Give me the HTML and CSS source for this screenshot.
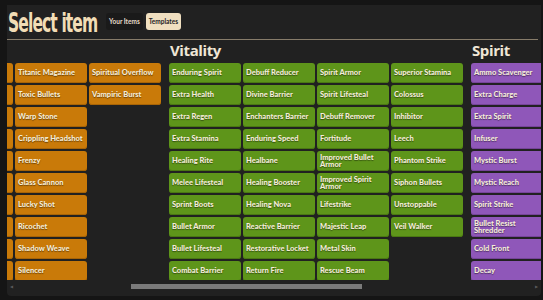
FILE: index.html
```html
<!DOCTYPE html>
<html>
<head>
    <title>Select item</title>
    <link rel="stylesheet" href="styles.css">
</head>
<body>
    <div class="panel">
        <div class="header">
            <h1 class="title">Select item</h1>
            <div class="tabs">
                <button class="tab">Your Items</button>
                <button class="tab active">Templates</button>
            </div>
        </div>

        <div class="shop">
            <div class="groups">
                <!-- weapon group, mostly scrolled off to the left -->
                <div class="group weapon">
                    <h2 class="group-title">&nbsp;</h2>
                    <div class="grid">
                        <div class="item"></div><div class="item"></div><div class="item"></div><div class="item"></div><div class="item"></div>
                        <div class="item"></div><div class="item"></div><div class="item"></div><div class="item"></div><div class="item"></div>
                        <div class="item">Titanic Magazine</div>
                        <div class="item">Toxic Bullets</div>
                        <div class="item">Warp Stone</div>
                        <div class="item">Crippling Headshot</div>
                        <div class="item">Frenzy</div>
                        <div class="item">Glass Cannon</div>
                        <div class="item">Lucky Shot</div>
                        <div class="item">Ricochet</div>
                        <div class="item">Shadow Weave</div>
                        <div class="item">Silencer</div>
                        <div class="item">Spiritual Overflow</div>
                        <div class="item">Vampiric Burst</div>
                    </div>
                </div>

                <div class="group vitality">
                    <h2 class="group-title">Vitality</h2>
                    <div class="grid">
                        <div class="item">Enduring Spirit</div>
                        <div class="item">Extra Health</div>
                        <div class="item">Extra Regen</div>
                        <div class="item">Extra Stamina</div>
                        <div class="item">Healing Rite</div>
                        <div class="item">Melee Lifesteal</div>
                        <div class="item">Sprint Boots</div>
                        <div class="item">Bullet Armor</div>
                        <div class="item">Bullet Lifesteal</div>
                        <div class="item">Combat Barrier</div>
                        <div class="item">Debuff Reducer</div>
                        <div class="item">Divine Barrier</div>
                        <div class="item">Enchanters Barrier</div>
                        <div class="item">Enduring Speed</div>
                        <div class="item">Healbane</div>
                        <div class="item">Healing Booster</div>
                        <div class="item">Healing Nova</div>
                        <div class="item">Reactive Barrier</div>
                        <div class="item">Restorative Locket</div>
                        <div class="item">Return Fire</div>
                        <div class="item">Spirit Armor</div>
                        <div class="item">Spirit Lifesteal</div>
                        <div class="item">Debuff Remover</div>
                        <div class="item">Fortitude</div>
                        <div class="item two">Improved Bullet Armor</div>
                        <div class="item two">Improved Spirit Armor</div>
                        <div class="item">Lifestrike</div>
                        <div class="item">Majestic Leap</div>
                        <div class="item">Metal Skin</div>
                        <div class="item">Rescue Beam</div>
                        <div class="item">Superior Stamina</div>
                        <div class="item">Colossus</div>
                        <div class="item">Inhibitor</div>
                        <div class="item">Leech</div>
                        <div class="item">Phantom Strike</div>
                        <div class="item">Siphon Bullets</div>
                        <div class="item">Unstoppable</div>
                        <div class="item">Veil Walker</div>
                    </div>
                </div>

                <div class="group spirit">
                    <h2 class="group-title">Spirit</h2>
                    <div class="grid">
                        <div class="item">Ammo Scavenger</div>
                        <div class="item">Extra Charge</div>
                        <div class="item">Extra Spirit</div>
                        <div class="item">Infuser</div>
                        <div class="item">Mystic Burst</div>
                        <div class="item">Mystic Reach</div>
                        <div class="item">Spirit Strike</div>
                        <div class="item two">Bullet Resist Shredder</div>
                        <div class="item">Cold Front</div>
                        <div class="item">Decay</div>
                    </div>
                </div>
            </div>
        </div>

        <div class="scrollbar">
            <span class="arrow">&#9664;</span>
            <div class="track"><div class="thumb"></div></div>
            <span class="arrow">&#9654;</span>
        </div>
    </div>
</body>
</html>
```

FILE: styles.css
```css
body {
    margin: 0;
    background-color: #151515;
    font-family: Lato, "Open Sans", sans-serif;
    height: 300px;
    overflow: hidden;
}
.panel {
    margin: 5px 2px 0 7px;
    height: 291px;
    background-color: #212121;
    border-radius: 0 0 4px 4px;
    overflow: hidden;
    display: flex;
    flex-direction: column;
}
.header {
    display: flex;
    align-items: center;
    height: 34px;
    margin-right: 3px;
    border-bottom: 1px solid #877c6a;
}
.title {
    margin: 2px 0 0 1px;
    width: 91px;
    font-family: "DejaVu Sans Condensed", "DejaVu Sans", sans-serif;
    font-weight: bold;
    font-size: 27px;
    letter-spacing: -1.4px;
    color: #f2ddb6;
    white-space: nowrap;
    transform: scaleX(0.64);
    transform-origin: left center;
}
.tabs {
    display: flex;
    gap: 3px;
    margin-left: 7px;
}
.tab {
    height: 17px;
    padding: 0 3px;
    border: none;
    border-radius: 3px;
    background-color: #1a1a1a;
    color: #e6dccb;
    font-family: Lato, sans-serif;
    font-weight: bold;
    font-size: 6.5px;
}
.tab.active {
    background-color: #f0dfc0;
    color: #222;
}
.shop {
    flex-grow: 1;
    overflow: hidden;
}
.groups {
    display: flex;
    gap: 8px;
    margin-left: -66px;
}
.group-title {
    margin: 0;
    height: 23px;
    padding-left: 1px;
    font-family: "Open Sans", sans-serif;
    font-weight: bold;
    font-size: 15px;
    letter-spacing: -0.4px;
    line-height: 21px;
    color: #efe6d6;
}
.grid {
    display: grid;
    grid-template-rows: repeat(10, 20px);
    grid-auto-flow: column;
    grid-auto-columns: 72px;
    gap: 2px;
}
.item {
    display: flex;
    align-items: center;
    padding: 0 3px;
    border-radius: 3px;
    font-weight: 900;
    font-size: 7.5px;
    line-height: 7px;
    color: #f4ecd9;
    text-shadow: 0 1px 1px rgba(0, 0, 0, 0.45);
    white-space: nowrap;
    overflow: hidden;
}
.item.two {
    white-space: normal;
}
.weapon .item {
    background-color: #c97a09;
    box-shadow: inset 0 -1px 0 #a86406;
}
.vitality .item {
    background-color: #5e951a;
    box-shadow: inset 0 -1px 0 #4a7812;
}
.spirit .item {
    background-color: #8f57b9;
    box-shadow: inset 0 -1px 0 #764499;
}
.scrollbar {
    display: flex;
    align-items: center;
    height: 12px;
    margin-bottom: 4px;
}
.arrow {
    width: 9px;
    font-size: 4px;
    color: #5a5a5a;
    text-align: center;
}
.track {
    flex-grow: 1;
}
.thumb {
    width: 231px;
    height: 5px;
    margin-left: 115px;
    background-color: #7a7a7a;
}
```
